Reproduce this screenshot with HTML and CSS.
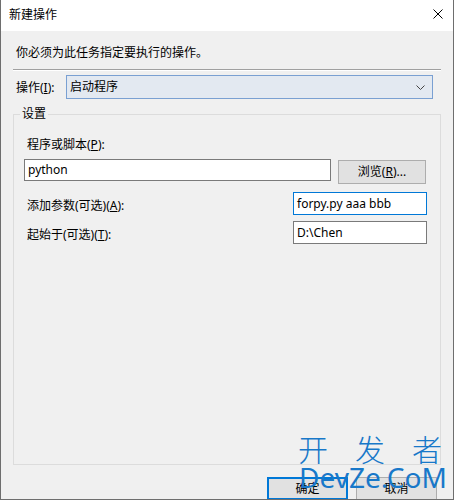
FILE: index.html
```html
<!DOCTYPE html>
<html lang="zh-CN">
<head>
    <meta charset="UTF-8">
    <title>新建操作</title>
    <link rel="stylesheet" href="styles.css">
</head>
<body>
    <div class="window">
        <div class="titlebar">
            <span class="title">新建操作</span>
            <svg class="close" width="10" height="10" viewBox="0 0 10 10">
                <path d="M0.5 0.5 L9.5 9.5 M9.5 0.5 L0.5 9.5" stroke="#000" stroke-width="1" fill="none"/>
            </svg>
        </div>
        <div class="content">
            <div class="intro">你必须为此任务指定要执行的操作。</div>
            <div class="separator"></div>

            <div class="op-row">
                <label class="op-label">操作(<u>I</u>):</label>
                <div class="combo">
                    <span>启动程序</span>
                    <svg width="9" height="5" viewBox="0 0 9 5">
                        <path d="M0.5 0.5 L4.5 4.5 L8.5 0.5" stroke="#444" stroke-width="1" fill="none"/>
                    </svg>
                </div>
            </div>

            <fieldset class="group">
                <legend>设置</legend>
                <div class="group-body">
                    <label class="field-label">程序或脚本(<u>P</u>):</label>
                    <div class="program-row">
                        <div class="textbox program">python</div>
                        <div class="btn browse">浏览(<u>R</u>)...</div>
                    </div>
                    <div class="param-row first">
                        <label class="field-label">添加参数(可选)(<u>A</u>):</label>
                        <div class="textbox small focused">forpy.py aaa bbb</div>
                    </div>
                    <div class="param-row">
                        <label class="field-label">起始于(可选)(<u>T</u>):</label>
                        <div class="textbox small">D:\Chen</div>
                    </div>
                </div>
            </fieldset>

            <div class="buttons">
                <div class="btn dialog default">确定</div>
                <div class="btn dialog">取消</div>
            </div>
        </div>

        <div class="watermark">
            <div class="wm-cn">开发者</div>
            <div class="wm-en">DevZe.CoM</div>
        </div>
    </div>
</body>
</html>
```

FILE: styles.css
```css
body {
    margin: 0;
    font-family: "Noto Sans", "Noto Sans CJK SC", sans-serif;
    font-size: 12px;
    color: #000;
    background: #f0f0f0;
}

.window {
    position: relative;
    width: 454px;
    height: 500px;
    box-sizing: border-box;
    background: #f0f0f0;
    border-left: 1px solid #6e6e6e;
    border-right: 1px solid #6e6e6e;
    border-bottom: 1px solid #6e6e6e;
    overflow: hidden;
}

.titlebar {
    height: 31px;
    background: #fff;
    display: flex;
    align-items: center;
    justify-content: space-between;
    padding: 0 10px 1px 8px;
    box-sizing: border-box;
}

.title {
    line-height: 16px;
}

.close {
    display: block;
    margin-top: -2px;
}

.content {
    padding: 0 12px;
}

.intro {
    margin-top: 14px;
    padding-left: 3px;
    line-height: 16px;
}

.separator {
    margin-top: 8px;
    height: 0;
    border-top: 1px solid #a0a0a0;
    border-bottom: 1px solid #fff;
}

.op-row {
    margin-top: 4px;
    display: flex;
    align-items: center;
}

.op-label {
    width: 50px;
    padding-left: 3px;
    line-height: 16px;
    padding-top: 1px;
}

.combo {
    width: 367px;
    height: 24px;
    box-sizing: border-box;
    border: 1px solid #7aa0d2;
    background: #e3e9f1;
    display: flex;
    align-items: center;
    justify-content: space-between;
    padding: 0 7px 0 3px;
    line-height: 16px;
}

.combo svg {
    display: block;
}

.group {
    margin: 7px 0 0 0;
    padding: 0;
    border: 1px solid #dcdcdc;
    min-inline-size: 0;
}

.group legend {
    margin-left: 6px;
    padding: 0 2px;
    line-height: 16px;
}

.group-body {
    height: 327px;
    padding: 15px 13px 0 10px;
}

.field-label {
    display: block;
    padding-left: 3px;
    line-height: 16px;
}

.program-row {
    margin-top: 6px;
    display: flex;
    align-items: flex-start;
}

.textbox {
    box-sizing: border-box;
    background: #fff;
    border: 1px solid #7a7a7a;
    padding: 0 3px;
    display: flex;
    align-items: center;
    line-height: 16px;
}

.program {
    width: 307px;
    height: 22px;
}

.small {
    width: 134px;
    height: 23px;
}

.focused {
    border-color: #0078d7;
}

.btn {
    box-sizing: border-box;
    background: #e1e1e1;
    border: 1px solid #adadad;
    display: flex;
    align-items: center;
    justify-content: center;
    line-height: 16px;
}

.browse {
    width: 88px;
    height: 24px;
    margin-left: 7px;
    margin-top: 1px;
}

.param-row {
    margin-top: 6px;
    display: flex;
    align-items: flex-end;
    justify-content: space-between;
}

.param-row.first {
    margin-top: 8px;
}

.param-row .field-label {
    padding-bottom: 1px;
}

.buttons {
    margin-top: 12px;
    display: flex;
    justify-content: flex-end;
    gap: 8px;
    padding-right: 4px;
}

.dialog {
    width: 81px;
    height: 23px;
}

.default {
    border: 2px solid #0078d7;
}

.watermark {
    position: absolute;
    left: 297px;
    top: 431px;
    width: 150px;
    color: #1878c9;
    white-space: nowrap;
    font-family: "Noto Sans CJK SC", sans-serif;
}

.wm-cn {
    font-size: 30px;
    line-height: 34px;
    letter-spacing: 27px;
    font-weight: 300;
}

.wm-en {
    font-family: "Noto Sans", sans-serif;
    font-size: 28px;
    line-height: 32px;
    margin-top: -4px;
    margin-left: 1px;
}
```
